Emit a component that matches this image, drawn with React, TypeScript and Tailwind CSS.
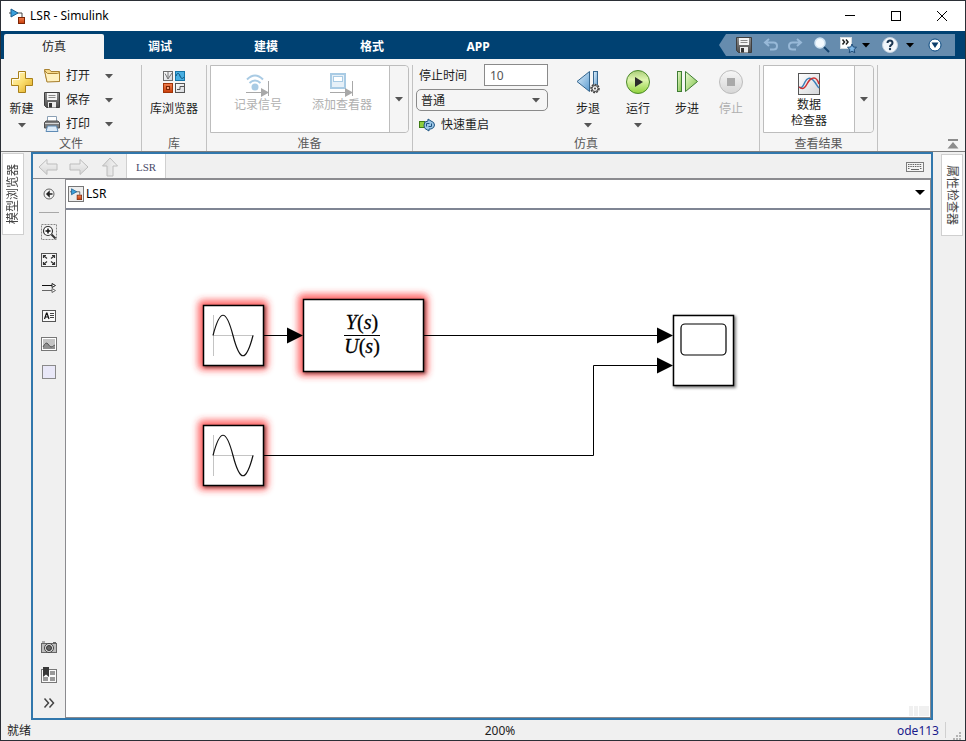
import React from "react";

type Kids = { children: React.ReactNode };

const Caret = ({ className = "text-[#555555]" }: { className?: string }) => (
  <svg width="8" height="5" viewBox="0 0 8 5" className={className} aria-hidden="true">
    <path d="M0 0h8L4 4.6z" fill="currentColor" />
  </svg>
);

const Gradients = () => (
  <svg width="0" height="0" className="absolute" aria-hidden="true">
    <defs>
      <linearGradient id="gold" x1="0" y1="0" x2="1" y2="1">
        <stop offset="0" stopColor="#fff7cf" />
        <stop offset="0.5" stopColor="#fbdf70" />
        <stop offset="1" stopColor="#dda51c" />
      </linearGradient>
      <linearGradient id="sky" x1="0" y1="0" x2="1" y2="1">
        <stop offset="0" stopColor="#e2f1fb" />
        <stop offset="1" stopColor="#5b9bd0" />
      </linearGradient>
      <linearGradient id="leaf" x1="0" y1="0" x2="1" y2="1">
        <stop offset="0" stopColor="#eefbd8" />
        <stop offset="1" stopColor="#7cc142" />
      </linearGradient>
      <linearGradient id="run" x1="0" y1="0" x2="0" y2="1">
        <stop offset="0" stopColor="#a9cd78" />
        <stop offset="0.4" stopColor="#dff5b0" />
        <stop offset="1" stopColor="#8fd23a" />
      </linearGradient>
      <linearGradient id="steel" x1="0" y1="0" x2="1" y2="1">
        <stop offset="0" stopColor="#ffffff" />
        <stop offset="1" stopColor="#d4d6da" />
      </linearGradient>
      <linearGradient id="ash" x1="0" y1="0" x2="0" y2="1">
        <stop offset="0" stopColor="#8f8f8f" />
        <stop offset="1" stopColor="#4c4c4c" />
      </linearGradient>
      <linearGradient id="fade" x1="0" y1="0" x2="0" y2="1">
        <stop offset="0" stopColor="#f6f6f6" />
        <stop offset="1" stopColor="#d6d6d6" />
      </linearGradient>
      <linearGradient id="rust" x1="0" y1="0" x2="0" y2="1">
        <stop offset="0" stopColor="#f08050" />
        <stop offset="1" stopColor="#c83c08" />
      </linearGradient>
    </defs>
  </svg>
);

const ModelIcon = () => (
  <svg width="16" height="16" viewBox="0 0 16 16" aria-hidden="true">
    <path d="M0 5h2M8 5h5v4" stroke="#444" fill="none" />
    <path d="M2 1v8l7-4z" fill="#3aa0dc" stroke="#1b5c8c" />
    <rect x="9.5" y="9.5" width="6" height="6" fill="url(#rust)" stroke="#7c2606" />
  </svg>
);

const NewIcon = () => (
  <svg width="24" height="24" viewBox="0 0 24 24" aria-hidden="true">
    <path d="M8.5 1.5h7v7h7v7h-7v7h-7v-7h-7v-7h7z" fill="url(#gold)" stroke="#a8801a" />
    <path d="M9.5 9.5v-7h5M2.5 14V9.5h7" stroke="#fffbe6" fill="none" />
  </svg>
);

const FolderIcon = () => (
  <svg width="16" height="16" viewBox="0 0 16 16" aria-hidden="true">
    <path d="M.5 1.500h5l1.500 2h8.500v10H3z" fill="#f6d98a" stroke="#a98232" />
    <path d="M3 14 .5 2.500l3 3h10l2-1v9z" fill="#fff1bf" stroke="#a98232" strokeLinejoin="round" />
  </svg>
);

const DiskIcon = () => (
  <svg width="16" height="16" viewBox="0 0 16 16" aria-hidden="true">
    <path d="M.5.5h15v15h-13l-2-2z" fill="url(#ash)" stroke="#3e3e3e" />
    <path d="M3 1h10v7H3z" fill="#f4f4f4" />
    <path d="M4.500 3.500h7M4.500 5.500h7" stroke="#8a8a8a" />
    <path d="M4 10h8v5.500H4z" fill="#ececec" />
    <path d="M5 11h3v4.500H5z" fill="#333" />
  </svg>
);

const PrinterIcon = () => (
  <svg width="16" height="16" viewBox="0 0 16 16" aria-hidden="true">
    <path d="M3.500 6.500v-6h9v6" fill="#fff" stroke="#8ba0b5" />
    <path d="M.5 6.500 2 5h12l1.500 1.500V12H.5z" fill="#7c7c7c" stroke="#4e4e4e" />
    <path d="M1 7.500h14" stroke="#d6d6d6" />
    <path d="m3.500 10-1.500 5.500h12L12.500 10z" fill="#dceaf7" stroke="#5f8bb5" />
  </svg>
);

const LibraryIcon = () => (
  <svg width="24" height="24" viewBox="0 0 24 24" aria-hidden="true">
    <rect x="1.500" y="1.500" width="9" height="9" fill="url(#steel)" stroke="#6e6e6e" />
    <path d="M3 3.500 6 9V2M6 9l4-6" stroke="#777" fill="none" />
    <rect x="13.500" y="1.500" width="9" height="9" fill="#48afe2" stroke="#1676a8" />
    <path d="M14 6c1.500-4 3-3 4 0s3 3 4 1" stroke="#0b4f7a" fill="none" />
    <rect x="1.500" y="13.500" width="9" height="9" fill="url(#rust)" stroke="#a03408" />
    <rect x="4.500" y="16.500" width="3" height="3" fill="#f5a07a" stroke="#7c2606" />
    <rect x="13.500" y="13.500" width="9" height="9" fill="url(#steel)" stroke="#555" />
    <path d="M15 19.500h3v-3h4" stroke="#555" fill="none" />
  </svg>
);

const LogIcon = () => (
  <svg width="26" height="26" viewBox="0 0 26 26" aria-hidden="true">
    <g fill="none" stroke="#a9cbe4" strokeWidth="2">
      <path d="M2 7.500q8-8 16 0M4.500 11q5.500-5 11 0" />
    </g>
    <circle cx="10" cy="15" r="3.500" fill="#a9cbe4" />
    <path d="M1 20.500h16M23.500 9v15" stroke="#a8a8a8" strokeWidth="1" />
    <path d="M16 16v9l8-4.500z" fill="#a8a8a8" />
  </svg>
);

const ViewerIcon = () => (
  <svg width="26" height="26" viewBox="0 0 26 26" aria-hidden="true">
    <rect x="2" y="2" width="14" height="14" fill="#e6f0f8" stroke="#a9cbe4" strokeWidth="2" />
    <rect x="4.500" y="4.500" width="9" height="5" fill="#fff" stroke="#a9cbe4" />
    <path d="M1 20.500h16M23.500 9v15" stroke="#a8a8a8" />
    <path d="M16 16v9l8-4.500z" fill="#a8a8a8" />
  </svg>
);

const RestartIcon = () => (
  <svg width="16" height="14" viewBox="0 0 16 14" aria-hidden="true">
    <rect x=".5" y="3.500" width="5" height="6" fill="#8fce3c" stroke="#3f7d14" />
    <path d="M5 7q0-4 4-4V1l3 2q3.500 1 3.500 4T12 11H10v2L6 10.500Q5 9.500 5 7z" fill="#9cc7e8" stroke="#1f5480" />
    <path d="M7.500 8.500v-3h3M12.500 5.500v3h-3" stroke="#1f5480" fill="none" />
  </svg>
);

const StepBackIcon = () => (
  <svg width="24" height="24" viewBox="0 0 24 24" aria-hidden="true">
    <path d="M13.500 1.500v20L1 11.500z" fill="url(#sky)" stroke="#35668f" strokeLinejoin="round" />
    <rect x="17.500" y="1.500" width="4" height="18" fill="url(#sky)" stroke="#35668f" />
    <circle cx="19" cy="18.500" r="4" fill="#ddd" stroke="#444" strokeWidth="1.500" strokeDasharray="2 1" />
    <circle cx="19" cy="18.500" r="3" fill="#f2f2f2" stroke="#444" />
    <circle cx="19" cy="18.500" r="1" fill="#444" />
  </svg>
);

const RunIcon = () => (
  <svg width="26" height="26" viewBox="0 0 26 26" aria-hidden="true">
    <circle cx="13" cy="13" r="11.500" fill="url(#run)" stroke="#4c8a2c" />
    <path d="M10 8v10l8-5z" fill="#2c2c2c" />
  </svg>
);

const StepIcon = () => (
  <svg width="24" height="24" viewBox="0 0 24 24" aria-hidden="true">
    <rect x="2.500" y="1.500" width="4" height="20" fill="url(#leaf)" stroke="#3f7d34" />
    <path d="M10.500 1.500v20l12-10z" fill="url(#leaf)" stroke="#3f7d34" strokeLinejoin="round" />
  </svg>
);

const StopIcon = () => (
  <svg width="26" height="26" viewBox="0 0 26 26" aria-hidden="true">
    <circle cx="13" cy="13" r="11.500" fill="url(#fade)" stroke="#bdbdbd" />
    <rect x="9" y="9" width="8" height="8" fill="#a9a9a9" />
  </svg>
);

const InspectorIcon = () => (
  <svg width="24" height="24" viewBox="0 0 24 24" aria-hidden="true">
    <rect x="1.500" y="1.500" width="21" height="21" fill="url(#steel)" stroke="#555" />
    <path d="M2 15c3 2 4-1 6-5s5-5 8-2 4 6 6 8" fill="none" stroke="#3b7fb8" strokeWidth="1.500" />
    <path d="M2 15c4 3 6 1 8-3s4-6 7-6 4 3 5 6" fill="none" stroke="#cc3030" strokeWidth="1.500" />
  </svg>
);

const CollapseIcon = () => (
  <svg width="12" height="10" viewBox="0 0 12 10" aria-hidden="true">
    <path d="M1 0h10v2H1zM6 3l5.500 6.500H.5z" fill="#8c8c8c" />
  </svg>
);

const UndoIcon = ({ flip = false }: { flip?: boolean }) => (
  <svg width="16" height="16" viewBox="0 0 16 16" className={flip ? "-scale-x-100" : ""} aria-hidden="true">
    <path d="M2 5.500h8.500q3.500 0 3.500 3.500t-3.500 3.500H7M6 2 2 5.500 6 9" fill="none" stroke="#98b9d8" strokeWidth="2" />
  </svg>
);

const SearchIcon = () => (
  <svg width="16" height="16" viewBox="0 0 16 16" aria-hidden="true">
    <path d="m9.500 9.500 5.500 5.500" stroke="#16456f" strokeWidth="2" />
    <circle cx="6" cy="6" r="5" fill="#f4fafe" stroke="#cfe3f2" strokeWidth="1.500" />
  </svg>
);

const FavoriteIcon = () => (
  <svg width="17" height="17" viewBox="0 0 17 17" aria-hidden="true">
    <rect x=".5" y=".5" width="11" height="11" fill="#fff" stroke="#d5dbe0" />
    <path d="m2.500 2.500 2 2.500-2 2.500m3.500-5 2 2.500-2 2.500" stroke="#222" strokeWidth="1.500" fill="none" />
    <path d="m12 7 1.300 3 3.200.3-2.400 2.200.7 3.300-2.800-1.700-2.800 1.700.7-3.300L7.500 10.300l3.200-.3z" fill="#7fb6e4" stroke="#1f4c78" />
  </svg>
);

const HelpIcon = () => (
  <svg width="16" height="16" viewBox="0 0 16 16" aria-hidden="true">
    <circle cx="8" cy="8" r="7.500" fill="#f2f6fa" stroke="#c4d2df" />
    <path d="M5.500 6q0-2.500 2.500-2.500T10.500 6q0 1-1.200 1.800T8 10" fill="none" stroke="#1b3550" strokeWidth="2" />
    <circle cx="8" cy="12" r="1.200" fill="#1b3550" />
  </svg>
);

const CircleMenuIcon = () => (
  <svg width="14" height="14" viewBox="0 0 14 14" aria-hidden="true">
    <circle cx="7" cy="7" r="6" fill="#fff" stroke="#0b4a80" />
    <path d="M3.500 4.500h7L7 10z" fill="#0b3d6b" />
  </svg>
);

const NavArrow = ({ className = "" }: { className?: string }) => (
  <svg width="20" height="18" viewBox="0 0 20 18" className={className} aria-hidden="true">
    <path d="M1 9 9 1.500V6h10v6H9v4.500z" fill="url(#fade)" stroke="#bcbcbc" />
  </svg>
);

const KeyboardIcon = () => (
  <svg width="20" height="12" viewBox="0 0 20 12" aria-hidden="true">
    <rect x="1.500" y="1.500" width="17" height="9" fill="#f4f4f4" stroke="#7c7c7c" />
    <path d="M3 3.500h14M3 5.500h14M3 7.500h2M15 7.500h2" stroke="#666" strokeWidth="1.200" strokeDasharray="1.500 .8" />
    <path d="M6 8.500h8" stroke="#666" />
  </svg>
);

const BackCircleIcon = () => (
  <svg width="12" height="12" viewBox="0 0 12 12" aria-hidden="true">
    <circle cx="6" cy="6" r="5" fill="#f3f3f3" stroke="#666" />
    <path d="M9.500 6H5M6 4 4 6l2 2z" fill="#222" stroke="#222" strokeWidth="1.500" />
  </svg>
);

const ZoomIcon = () => (
  <svg width="16" height="16" viewBox="0 0 16 16" aria-hidden="true">
    <rect x=".5" y=".5" width="15" height="15" fill="none" stroke="#888" strokeDasharray="2 1" />
    <path d="m10.500 10.500 4 4" stroke="#333" strokeWidth="2" />
    <circle cx="7" cy="7" r="4.500" fill="#fff" stroke="#333" strokeWidth="1.200" />
    <path d="M7 4.500v5M4.500 7h5" stroke="#111" strokeWidth="1.500" />
  </svg>
);

const FitIcon = () => (
  <svg width="16" height="14" viewBox="0 0 16 14" aria-hidden="true">
    <rect x=".5" y=".5" width="15" height="13" fill="#f5f5f5" stroke="#555" />
    <path d="M2.500 5V2.500H5M11 2.500h2.500V5M2.500 9v2.500H5M11 11.500h2.500V9M3 3l3 2.500M13 3l-3 2.500M3 11l3-2.500M13 11l-3-2.500" stroke="#333" strokeWidth="1.200" fill="none" />
  </svg>
);

const SignalIcon = () => (
  <svg width="16" height="12" viewBox="0 0 16 12" aria-hidden="true">
    <path d="M1 3.500h10" stroke="#111" />
    <path d="M11 1.500v4l3.500-2z" fill="#fff" stroke="#222" />
    <path d="M1 8.500h10" stroke="#666" />
    <path d="M11 6.500v4l3.500-2z" fill="#fff" stroke="#666" />
  </svg>
);

const AnnotationIcon = () => (
  <svg width="14" height="12" viewBox="0 0 14 12" aria-hidden="true">
    <rect x=".5" y=".5" width="13" height="11" fill="#fafafa" stroke="#555" />
    <path d="m2.500 9 2-6h.5l2 6M3.500 7h3" stroke="#111" strokeWidth="1.200" fill="none" />
    <path d="M8 3.500h4M8 5.500h4M8 7.500h4" stroke="#444" />
  </svg>
);

const ImageIcon = () => (
  <svg width="16" height="14" viewBox="0 0 16 14" aria-hidden="true">
    <rect x=".5" y=".5" width="15" height="13" fill="#fff" stroke="#777" />
    <rect x="2" y="2" width="12" height="10" fill="#c4c4c4" />
    <path d="M2 10q3-6 5-3t3 3 4-1v3H2z" fill="#8f8f8f" />
    <path d="M2 10q3-6 5-3t3 3 4-2" fill="none" stroke="#555" />
  </svg>
);

const AreaIcon = () => (
  <svg width="14" height="14" viewBox="0 0 14 14" aria-hidden="true">
    <rect x=".5" y=".5" width="13" height="13" fill="#e9e8f8" stroke="#8a8a8a" />
  </svg>
);

const CameraIcon = () => (
  <svg width="16" height="13" viewBox="0 0 16 13" aria-hidden="true">
    <path d="M1 1h3M12 1.500h3" stroke="#666" />
    <rect x=".5" y="2.500" width="15" height="9" fill="#bdbdbd" stroke="#666" />
    <circle cx="8" cy="7" r="4.500" fill="#ddd" stroke="#444" />
    <circle cx="8" cy="7" r="2.500" fill="#666" stroke="#333" />
  </svg>
);

const BookmarkIcon = () => (
  <svg width="16" height="16" viewBox="0 0 16 16" aria-hidden="true">
    <rect x=".5" y="2.500" width="15" height="13" fill="#fafafa" stroke="#777" />
    <path d="M9 4h5v4H9zM9 10h5v4H9zM2 10h5v4H2z" fill="#999" />
    <path d="M2 0h6v10L5 7.500 2 10z" fill="#383838" />
  </svg>
);

const ChevronsIcon = () => (
  <svg width="12" height="12" viewBox="0 0 12 12" aria-hidden="true">
    <path d="m1.500 1.500 4 4.500-4 4.500M6.500 1.500l4 4.500-4 4.500" stroke="#444" strokeWidth="1.500" fill="none" />
  </svg>
);

const Section = ({ label, className, children }: Kids & { label: string; className: string }) => (
  <section aria-label={label} className={`flex shrink-0 flex-col border-r border-[#c2c2c2] ${className}`}>
    <div className="flex h-[72px] shrink-0 items-start">{children}</div>
    <div className="text-center leading-[14px] text-[#595959]">{label}</div>
  </section>
);

const BigButton = ({ icon, label, menu, disabled, className }: { icon: React.ReactNode; label: string; menu?: boolean; disabled?: boolean; className: string }) => (
  <button type="button" disabled={disabled} className={`mt-1 flex shrink-0 flex-col items-center disabled:text-[#b0b0b0] ${className}`}>
    <span className="flex h-[26px] items-center">{icon}</span>
    <span className="mt-1 leading-5">{label}</span>
    {menu && <span className="mt-1"><Caret /></span>}
  </button>
);

const FileRow = ({ icon, label }: { icon: React.ReactNode; label: string }) => (
  <div className="flex h-6 items-center">
    <button type="button" className="flex w-[61px] items-center gap-[6px]">
      {icon}
      {label}
    </button>
    <button type="button" aria-label={`${label}选项`} className="flex h-6 items-center"><Caret /></button>
  </div>
);

const ToolButton = ({ label, children }: Kids & { label: string }) => (
  <button type="button" aria-label={label} className="flex h-7 w-full shrink-0 items-center justify-center">
    {children}
  </button>
);

const QuickButton = ({ label, className, children }: Kids & { label: string; className: string }) => (
  <button type="button" aria-label={label} className={`flex h-full shrink-0 items-center justify-center ${className}`}>
    {children}
  </button>
);

const Block = ({ x, y, w, h, glow }: { x: number; y: number; w: number; h: number; glow?: boolean }) => (
  <g>
    {glow && <rect x={x - 5} y={y - 5} width={w + 9} height={h + 9} rx="5" fill="#ff2a2a" opacity="0.7" filter="url(#halo)" />}
    <rect x={x + 1} y={y + 1} width={w + 1} height={h + 1} fill="#000" opacity={glow ? 0.4 : 0.5} filter="url(#shade)" />
    <rect x={x + 0.5} y={y + 0.5} width={w - 1} height={h - 1} fill="#fff" stroke="#000" strokeWidth="1.500" />
  </g>
);

const SineBlock = ({ x, y }: { x: number; y: number }) => (
  <g>
    <Block x={x} y={y} w={61} h={61} glow />
    <path d={`M${x + 10.5} ${y + 10}v41M${x + 10} ${y + 30.5}h41`} stroke="#c4c4c4" fill="none" />
    <path d={`M${x + 10} ${y + 30.5}c7-27 13-27 20 0s13 27 20 0`} stroke="#111" strokeWidth="1.200" fill="none" />
  </g>
);

const Fraction = ({ name, y }: { name: string; y: number }) => (
  <text x="362" y={y} fontFamily="'Liberation Serif', serif" fontSize="20" fontStyle="italic" textAnchor="middle" stroke="#000" strokeWidth="0.300">
    {name}
    <tspan fontStyle="normal">(</tspan>s<tspan fontStyle="normal">)</tspan>
  </text>
);

const Diagram = () => (
  <svg width="700" height="320" viewBox="66 210 700 320" className="block max-w-full" role="img" aria-label="LSR 模型">
    <defs>
      <filter id="halo" x="-30%" y="-30%" width="160%" height="160%"><feGaussianBlur stdDeviation="3.500" /></filter>
      <filter id="shade" x="-20%" y="-20%" width="140%" height="140%"><feGaussianBlur stdDeviation="1.500" /></filter>
    </defs>
    <SineBlock x={203} y={305} />
    <SineBlock x={203} y={425} />
    <Block x={303} y={299} w={121} h={73} glow />
    <Block x={673} y={315} w={61} h={71} />
    <rect x="681" y="324" width="45" height="31" rx="4" fill="#fff" stroke="#000" strokeWidth="1.200" />
    <g stroke="#000" fill="none">
      <path d="M264 335.500h25M424 335.500h235M264 455.500h329.500v-90H659" />
    </g>
    <path d="M287 327.500v16l16-8zM657 327.500v16l16-8zM657 357.500v16l16-8z" />
    <path d="M344 335.500h36" stroke="#000" strokeWidth="1.200" />
    <Fraction name="Y" y={329} />
    <Fraction name="U" y={353} />
  </svg>
);

const TABS = ["调试", "建模", "格式", "APP"];

export default function App() {
  return (
    <div className="flex min-h-screen flex-col border border-[#2b2f36] bg-[#f0f0f0] font-['Noto_Sans','Noto_Sans_CJK_SC',sans-serif] text-[12px] text-[#1e1e1e]">
      <Gradients />
      <header className="flex h-[30px] items-center bg-white pl-2">
        <ModelIcon />
        <h1 className="ml-[5px] flex-1 text-black">LSR - Simulink</h1>
        <button type="button" aria-label="最小化" className="flex h-full w-[46px] items-center justify-center">
          <svg width="10" height="10"><path d="M0 4.500h10" stroke="#000" /></svg>
        </button>
        <button type="button" aria-label="最大化" className="flex h-full w-[46px] items-center justify-center">
          <svg width="10" height="10"><rect x=".5" y=".5" width="9" height="9" fill="none" stroke="#000" /></svg>
        </button>
        <button type="button" aria-label="关闭" className="flex h-full w-[46px] items-center justify-center">
          <svg width="10" height="10"><path d="m0 0 10 10M10 0 0 10" stroke="#000" /></svg>
        </button>
      </header>

      <nav className="flex h-7 items-end bg-[#004172] pl-[3px]">
        <div className="flex flex-1 gap-[6px]">
          <button type="button" className="h-[25px] w-[100px] rounded-t-xs bg-[#f5f5f5]">仿真</button>
          {TABS.map((t) => (
            <button key={t} type="button" className="h-[25px] w-[100px] font-bold text-white">{t}</button>
          ))}
        </div>
        <div className="mr-[10px] mb-[3px] flex h-[22px] items-center bg-[#668cae] pr-2 pl-[13px] [clip-path:polygon(0_50%,7px_0,100%_0,100%_100%,7px_100%)]">
          <QuickButton label="保存模型" className="w-6"><DiskIcon /></QuickButton>
          <QuickButton label="撤销" className="ml-[3px] w-6"><UndoIcon /></QuickButton>
          <QuickButton label="重做" className="w-6"><UndoIcon flip /></QuickButton>
          <QuickButton label="查找" className="ml-[3px] w-6"><SearchIcon /></QuickButton>
          <QuickButton label="收藏" className="ml-[2px] w-6"><FavoriteIcon /></QuickButton>
          <QuickButton label="收藏选项" className="w-3"><Caret className="text-black" /></QuickButton>
          <QuickButton label="帮助" className="ml-[6px] w-6"><HelpIcon /></QuickButton>
          <QuickButton label="帮助选项" className="ml-[2px] w-3"><Caret className="text-black" /></QuickButton>
          <QuickButton label="更多" className="ml-[7px] w-6"><CircleMenuIcon /></QuickButton>
        </div>
      </nav>

      <div className="flex h-[93px] border-b border-[#7d7d7d] bg-[#f5f5f5] pt-[6px]">
        <Section label="文件" className="w-[141px]">
          <BigButton icon={<NewIcon />} label="新建" menu className="ml-1 w-[33px]" />
          <div className="-mt-px ml-[6px]">
            <FileRow icon={<FolderIcon />} label="打开" />
            <FileRow icon={<DiskIcon />} label="保存" />
            <FileRow icon={<PrinterIcon />} label="打印" />
          </div>
        </Section>
        <Section label="库" className="w-[65px]">
          <BigButton icon={<LibraryIcon />} label="库浏览器" className="w-full" />
        </Section>
        <Section label="准备" className="w-[206px]">
          <div className="ml-[3px] flex h-[68px] w-[199px] rounded-r border border-[#bdbdbd] bg-white">
            <button type="button" disabled className="flex h-full w-[94px] flex-col items-center pt-[6px] text-[#b0b0b0]">
              <LogIcon />
              <span className="-mt-px leading-4">记录信号</span>
            </button>
            <button type="button" disabled className="flex h-full flex-1 flex-col items-center pt-[6px] pr-[10px] text-[#b0b0b0]">
              <ViewerIcon />
              <span className="-mt-px leading-4">添加查看器</span>
            </button>
            <button type="button" aria-label="更多准备工具" className="flex w-[19px] items-center justify-center rounded-r border-l border-[#bdbdbd] bg-[#f5f5f5]"><Caret /></button>
          </div>
        </Section>
        <Section label="仿真" className="w-[347px]">
          <div className="ml-[3px] flex w-[132px] flex-col">
            <div className="-mt-px flex items-center justify-between pl-[3px]">
              <label htmlFor="stop-time" className="pt-[2px]">停止时间</label>
              <input id="stop-time" defaultValue="10" className="h-[22px] w-16 border border-[#8a8a8a] bg-white px-[5px] text-[#555555]" />
            </div>
            <div className="mt-[3px] grid items-center">
              <select aria-label="仿真模式" className="col-start-1 row-start-1 h-[22px] appearance-none rounded-[5px] border border-[#8a8a8a] bg-[#f5f5f5] px-1 pt-px leading-5">
                <option>普通</option>
              </select>
              <span className="pointer-events-none col-start-1 row-start-1 mr-2 justify-self-end"><Caret /></span>
            </div>
            <button type="button" className="mt-1 flex h-5 items-center gap-[6px] pl-[3px]">
              <RestartIcon />
              快速重启
            </button>
          </div>
          <BigButton icon={<StepBackIcon />} label="步退" menu className="ml-[15px] w-[50px]" />
          <BigButton icon={<RunIcon />} label="运行" menu className="w-[50px]" />
          <BigButton icon={<StepIcon />} label="步进" className="w-12" />
          <BigButton icon={<StopIcon />} label="停止" disabled className="w-10" />
        </Section>
        <Section label="查看结果" className="w-[118px]">
          <div className="ml-[3px] flex h-[68px] w-[111px] rounded-r border border-[#bdbdbd] bg-white">
            <button type="button" className="flex flex-1 flex-col items-center pt-[6px]">
              <InspectorIcon />
              <span className="pt-px leading-4">数据<br />检查器</span>
            </button>
            <button type="button" aria-label="更多结果工具" className="flex w-[19px] items-center justify-center rounded-r border-l border-[#bdbdbd] bg-[#f5f5f5]"><Caret /></button>
          </div>
        </Section>
        <div className="flex flex-1 items-end justify-end pr-[6px] pb-[2px]">
          <button type="button" aria-label="折叠工具条"><CollapseIcon /></button>
        </div>
      </div>

      <div className="flex flex-1">
        <aside className="w-[30px] shrink-0 pt-px pl-px">
          <button type="button" className="flex h-[82px] w-[22px] items-center justify-center border border-[#cfcfcf] bg-white text-[#444444]">
            <span className="rotate-180 leading-4 [text-orientation:sideways] [writing-mode:vertical-rl]">模型浏览器</span>
          </button>
        </aside>

        <main className="flex flex-1 flex-col border-2 border-[#3177ac]">
          <div className="flex h-[25px] items-center border-b border-[#8b8b8f] pl-[5px]">
            <button type="button" aria-label="后退" className="w-[31px] pt-[2px]"><NavArrow /></button>
            <button type="button" aria-label="前进" className="w-[31px] pt-[2px]"><NavArrow className="-scale-x-100" /></button>
            <button type="button" aria-label="转到父级" className="w-[26px] pt-[2px]"><NavArrow className="rotate-90" /></button>
            <button type="button" className="h-full w-10 border-x border-[#d0d0d0] bg-white pt-[2px] font-['Liberation_Serif','Noto_Sans_CJK_SC',serif] text-[11px] text-[#4a4a6a]">LSR</button>
            <span className="flex-1" />
            <button type="button" aria-label="键盘快捷方式" className="mr-[6px] pt-px"><KeyboardIcon /></button>
          </div>
          <div className="flex flex-1">
            <div className="flex w-8 shrink-0 flex-col py-px">
              <ToolButton label="隐藏浏览器"><BackCircleIcon /></ToolButton>
              <hr className="mx-[6px] mt-1 mb-[5px] border-t border-[#a8a8a8]" />
              <ToolButton label="缩放"><ZoomIcon /></ToolButton>
              <ToolButton label="适应视图"><FitIcon /></ToolButton>
              <ToolButton label="信号线"><SignalIcon /></ToolButton>
              <ToolButton label="注释"><AnnotationIcon /></ToolButton>
              <ToolButton label="图像"><ImageIcon /></ToolButton>
              <ToolButton label="区域"><AreaIcon /></ToolButton>
              <div className="flex-1" />
              <ToolButton label="截图"><CameraIcon /></ToolButton>
              <ToolButton label="书签"><BookmarkIcon /></ToolButton>
              <ToolButton label="展开"><ChevronsIcon /></ToolButton>
            </div>
            <div className="flex flex-1 flex-col border border-[#8b8b8f] bg-white">
              <div className="flex h-[30px] items-center border-b-2 border-[#7f8594] pr-[5px] pl-[2px]">
                <span className="flex size-4 items-center justify-center border border-[#777777] bg-[#eeeeee] p-px"><ModelIcon /></span>
                <span className="ml-[2px] flex-1 text-black">LSR</span>
                <button type="button" aria-label="模型路径" className="pb-[3px]">
                  <svg width="10" height="5" viewBox="0 0 10 5"><path d="M0 0h10L5 5z" /></svg>
                </button>
              </div>
              <div className="flex-1">
                <Diagram />
              </div>
              <div className="flex h-[11px] justify-end gap-px pr-px pb-px" aria-hidden="true">
                <span className="w-1 bg-[#f0f0f0]" />
                <span className="w-1 bg-[#f0f0f0]" />
                <span className="w-[10px] bg-[#f0f0f0]" />
              </div>
            </div>
          </div>
        </main>

        <aside className="flex w-8 shrink-0 justify-end pt-[2px] pr-[2px]">
          <button type="button" className="flex h-[82px] w-[22px] items-center justify-center border border-[#cfcfcf] bg-white text-[#444444]">
            <span className="leading-4 [text-orientation:sideways] [writing-mode:vertical-rl]">属性检查器</span>
          </button>
        </aside>
      </div>

      <footer className="grid h-5 grid-cols-[1fr_auto_1fr] items-center pr-1 pl-[6px]">
        <span className="pt-px">就绪</span>
        <span className="pt-px pl-8">200%</span>
        <div className="flex h-full items-center justify-end">
          <span className="pt-px text-[#1a1a8c]">ode113</span>
          <span className="mr-[7px] ml-[6px] h-4 w-px bg-[#d0d0d0]" />
          <svg width="8" height="8" viewBox="0 0 8 8" className="self-end" aria-hidden="true">
            <path d="M6 0h2v2H6zM3 3h2v2H3zM6 3h2v2H6zM0 6h2v2H0zM3 6h2v2H3zM6 6h2v2H6z" fill="#b4b4b4" />
          </svg>
        </div>
      </footer>
    </div>
  );
}
